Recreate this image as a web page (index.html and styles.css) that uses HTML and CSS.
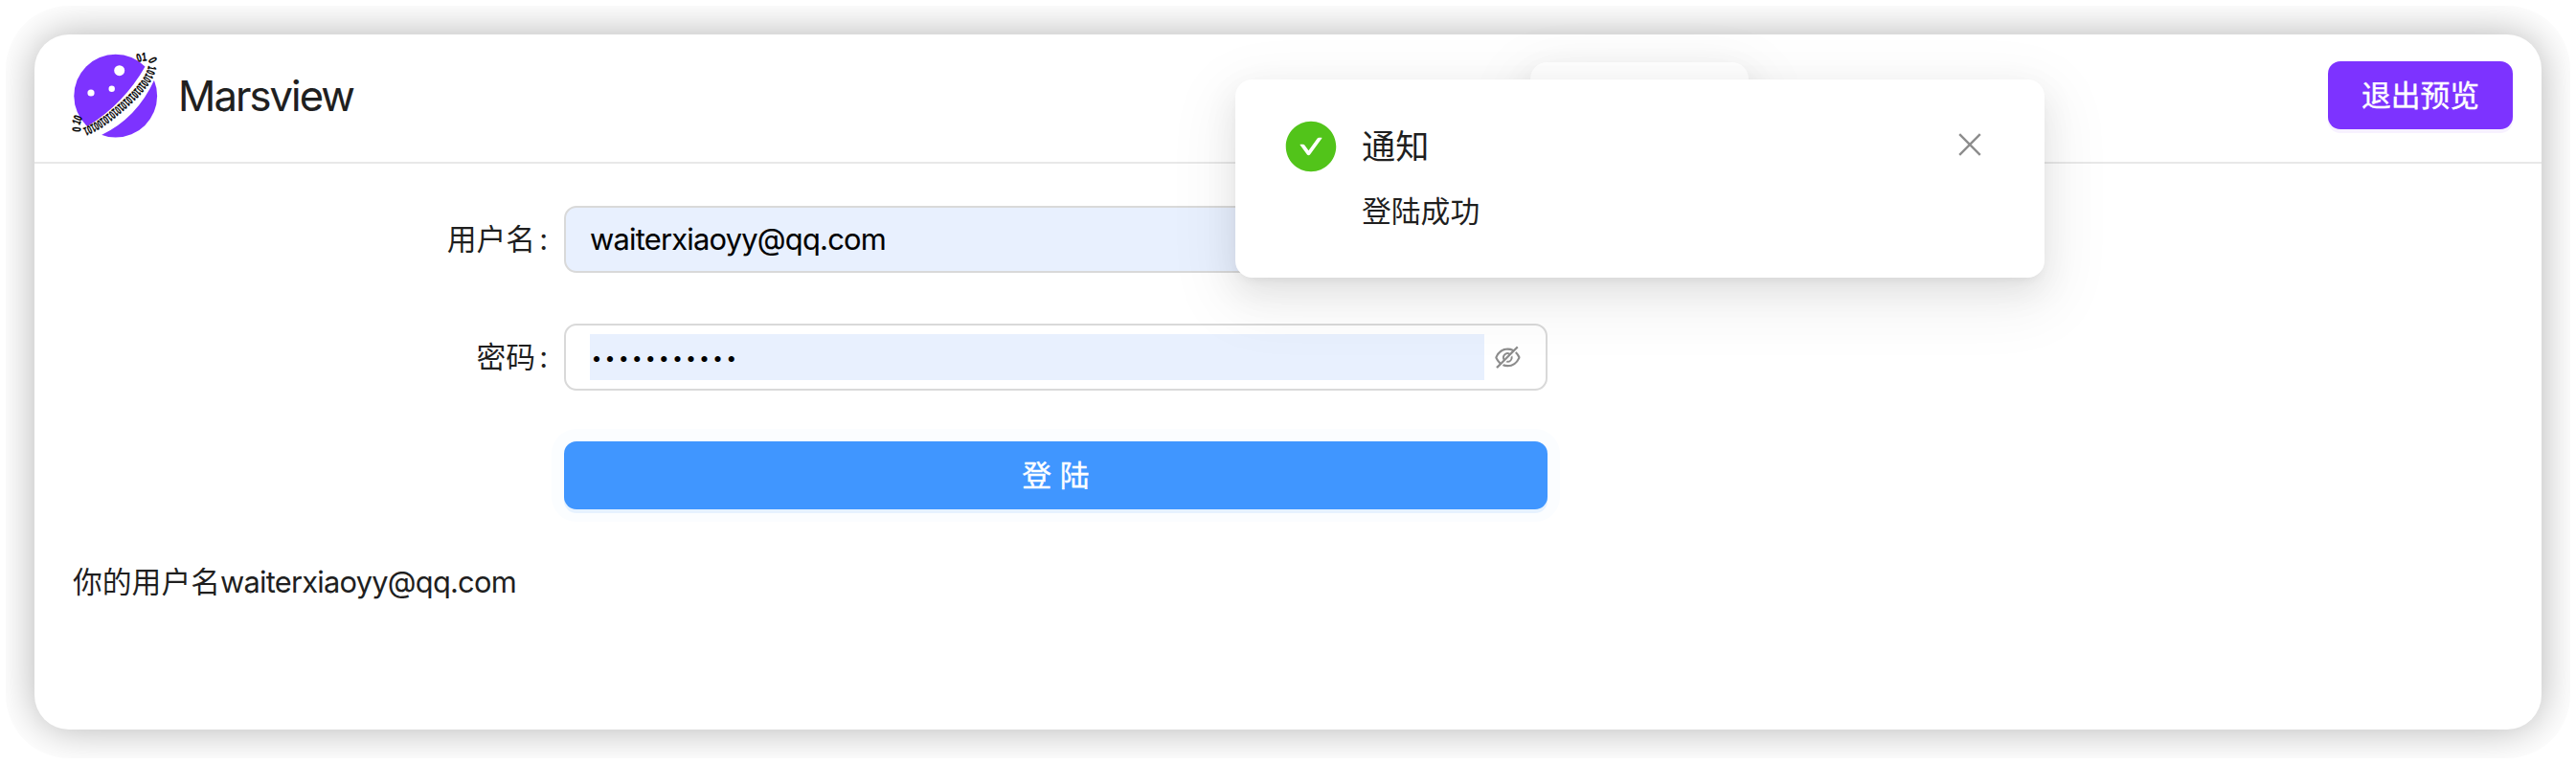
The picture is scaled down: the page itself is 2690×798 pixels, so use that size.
FILE: index.html
```html
<!DOCTYPE html>
<html lang="zh-CN">
<head>
<meta charset="utf-8">
<title>Marsview</title>
<link rel="stylesheet" href="styles.css">
</head>
<body>
<div class="frame">
<div class="window">
  <header class="header">
    <div class="brand">
      <svg class="logo" viewBox="72 50 100 98" width="100" height="98">
        <defs>
          <path id="ring-top" d="M144.4 64.4Q149 62 157 62.4"/>
          <path id="ring-turn" d="M154.6 61.4L157.4 67"/>
          <path id="ring-main" d="M154.8 67.5C153.4 81 135.5 98.6 117 113.6Q102 127 85.5 133.4"/>
          <path id="ring-end" d="M84 137L84.5 131.6"/>
          <path id="ring-tail" d="M83 130L86.6 120.6"/>
        </defs>
        <circle cx="120.7" cy="99.2" r="43.4" fill="#7d33ff"/>
        <path d="M151.7 68.3Q129.7 107.1 91.7 130.7L84 141L106 140Q143.1 122 161 82.7L166 70L157 58Z" fill="#fff"/>
        <circle cx="124.7" cy="72.7" r="5.5" fill="#fff"/>
        <circle cx="95" cy="96" r="3.6" fill="#fff"/>
        <circle cx="116.7" cy="91.7" r="3.2" fill="#fff"/>
        <g class="digits">
          <text><textPath href="#ring-top" textLength="9.5" lengthAdjust="spacingAndGlyphs">01</textPath></text>
          <text><textPath href="#ring-turn" textLength="5" lengthAdjust="spacingAndGlyphs">0</textPath></text>
          <text><textPath href="#ring-main" textLength="97" lengthAdjust="spacingAndGlyphs">1010010101010101010100101</textPath></text>
          <text><textPath href="#ring-end" textLength="5" lengthAdjust="spacingAndGlyphs">0</textPath></text>
          <text><textPath href="#ring-tail" textLength="9" lengthAdjust="spacingAndGlyphs">10</textPath></text>
        </g>
      </svg>
      <span class="brand-name">Marsview</span>
    </div>
    <button class="btn btn-exit">退出预览</button>
  </header>
  <main class="content">
    <div class="form-row">
      <label class="label">用户名<span class="colon">:</span></label>
      <div class="field field-filled"><span class="email">waiterxiaoyy@qq.com</span></div>
    </div>
    <div class="form-row">
      <label class="label">密码<span class="colon">:</span></label>
      <div class="field">
        <div class="password">•••••••••••</div>
        <svg class="eye" viewBox="0 0 1024 1024"><path d="M942.2 486.2Q889.47 375.11 816.7 305l-50.88 50.88C807.31 395.53 843.45 447.4 874.7 512 791.5 684.2 673.4 766 512 766q-72.67 0-133.87-22.38L323 798.75Q408 838 512 838q288.3 0 430.2-300.3a60.29 60.29 0 000-51.5zm-63.57-320.64L836 122.88a8 8 0 00-11.32 0L715.31 232.2Q624.86 186 512 186q-288.3 0-430.2 300.3a60.3 60.3 0 000 51.5q56.69 119.4 136.5 191.41L112.48 835a8 8 0 000 11.31L155.17 889a8 8 0 0011.31 0l712.15-712.12a8 8 0 000-11.32zM149.3 512C232.6 339.8 350.7 258 512 258c54.54 0 104.13 9.36 149.12 28.39l-70.3 70.3a176 176 0 00-238.13 238.13l-83.42 83.42C223.1 637.49 183.3 582.28 149.3 512zm246.7 0a112.11 112.11 0 01146.2-106.69L401.31 546.2A112 112 0 01396 512z"/><path d="M508 624c-3.46 0-6.87-.16-10.25-.47l-52.82 52.82a176.09 176.09 0 00227.42-227.42l-52.82 52.82c.31 3.38.47 6.79.47 10.25a111.94 111.94 0 01-112 112z"/></svg>
      </div>
    </div>
    <div class="form-row form-submit">
      <button class="btn btn-login">登 陆</button>
    </div>
    <p class="result">你的用户名<span class="email">waiterxiaoyy@qq.com</span></p>
  </main>
</div>
</div>
<div class="notice-behind"></div>
<div class="notice">
  <svg class="notice-icon" viewBox="0 0 1024 1024"><path d="M512 64C264.6 64 64 264.6 64 512s200.6 448 448 448 448-200.6 448-448S759.4 64 512 64zm193.5 301.7l-210.6 292a31.8 31.8 0 01-51.7 0L318.5 484.9c-3.8-5.3 0-12.7 6.5-12.7h46.9c10.2 0 19.9 4.9 25.9 13.3l71.2 98.8 157.2-218c6-8.3 15.6-13.3 25.9-13.3H699c6.5 0 10.3 7.4 6.5 12.7z"/></svg>
  <div class="notice-body">
    <div class="notice-title">通知</div>
    <div class="notice-text">登陆成功</div>
  </div>
  <svg class="notice-close" viewBox="0 0 24 24"><path d="M1.2 1.2L22.8 22.8M22.8 1.2L1.2 22.8"/></svg>
</div>
</body>
</html>
```
FILE: styles.css
```css
* {
  box-sizing: border-box;
}

body {
  margin: 0;
  padding: 6px;
  height: 798px;
  overflow: hidden;
  background: #fff;
  color: rgba(0, 0, 0, 0.88);
  font-family: Inter, "Noto Sans CJK SC", sans-serif;
  font-size: 30.8px;
  line-height: 48px;
}

.frame {
  padding: 30px;
  border-radius: 66px;
  overflow: hidden;
}

.window {
  height: 726px;
  border-radius: 36px;
  background: #fff;
  box-shadow: 0 0 44px rgba(0, 0, 0, 0.3);
}

.header {
  display: flex;
  align-items: center;
  justify-content: space-between;
  height: 135px;
  padding: 0 30px 0 36px;
  border-bottom: 2px solid #e8e8e8;
}

.brand {
  display: flex;
  align-items: center;
}

.logo {
  display: block;
  margin-top: -6px;
}

.digits {
  fill: #000;
  stroke: #000;
  stroke-width: 0.35;
  font-family: "Liberation Sans", sans-serif;
  font-size: 12.4px;
  font-weight: 700;
}

.brand-name {
  margin: -5px 0 0 14px;
  font-size: 43.5px;
  letter-spacing: -1.9px;
  -webkit-text-stroke: 0.2px currentColor;
}

.btn {
  display: block;
  height: 71px;
  padding: 0;
  border: 0;
  border-radius: 13px;
  color: #fff;
  font: inherit;
  -webkit-text-stroke: 0.4px #fff;
}

.btn-exit {
  width: 193px;
  margin-bottom: 6px;
  background: #7d33ff;
  box-shadow: 0 4px 0 #f7f1ff;
}

.content {
  display: flex;
  flex-direction: column;
  padding: 44px 0 0 40px;
}

.form-row {
  display: flex;
  align-items: center;
  height: 70px;
  margin-bottom: 53px;
}

.label {
  width: 513px;
  text-align: right;
}

.colon {
  margin: 0 17px 0 4px;
}

.field {
  display: flex;
  align-items: center;
  width: 1027px;
  height: 70px;
  padding: 0 24px 0 25px;
  border: 2px solid #d9d9d9;
  border-radius: 13px;
  background: #fff;
}

.field-filled {
  background: #e8f0fe;
  color: #000;
}

.email {
  letter-spacing: -0.75px;
  -webkit-text-stroke: 0.1px currentColor;
}

.password {
  flex: none;
  width: 934px;
  height: 48px;
  padding-left: 1.5px;
  background: #e8f0fe;
  color: #000;
  font-size: 19.5px;
  line-height: 51px;
  letter-spacing: 3.1px;
}

.eye {
  flex: none;
  width: 30.8px;
  height: 30.8px;
  margin-left: 9px;
  fill: rgba(0, 0, 0, 0.45);
}

.form-submit {
  height: 71px;
  margin-bottom: 52px;
  padding-left: 513px;
}

.btn-login {
  width: 1027px;
  background: #4096ff;
  box-shadow: 0 4px 0 #e6f2ff, 0 0 0 13px #fbfdff;
}

.result {
  margin: 0;
}

.notice,
.notice-behind {
  position: absolute;
  border-radius: 17.6px;
  background: #fff;
  box-shadow: 0 13.2px 35.2px rgba(0, 0, 0, 0.08), 0 6.6px 13.2px -8.8px rgba(0, 0, 0, 0.12), 0 19.8px 61.6px 17.6px rgba(0, 0, 0, 0.05);
}

.notice-behind {
  left: 1598px;
  top: 65px;
  width: 228px;
  height: 130px;
}

.notice {
  display: flex;
  align-items: flex-start;
  left: 1290px;
  top: 83px;
  width: 845px;
  height: 207px;
  padding: 40px 62px 0 49px;
}

.notice-icon {
  width: 60px;
  height: 60px;
  fill: #52c41a;
}

.notice-body {
  flex: 1;
  margin-left: 23px;
}

.notice-title {
  height: 53px;
  margin-bottom: 21px;
  font-size: 35.2px;
  line-height: 60px;
}

.notice-close {
  width: 24px;
  height: 24px;
  margin: 16px 4px 0 0;
  fill: none;
  stroke: rgba(0, 0, 0, 0.45);
  stroke-width: 2.4;
}
```
